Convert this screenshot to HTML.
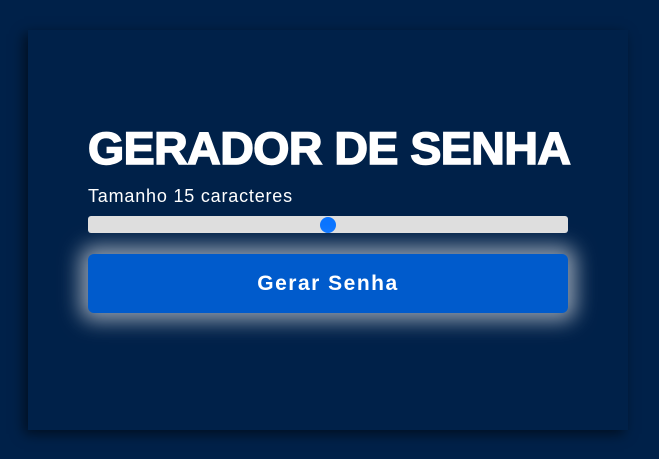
<!DOCTYPE html>
<html><head><meta charset="utf-8"><style>
html,body{margin:0;padding:0;width:659px;height:459px;overflow:hidden;background:#002149;font-family:"Liberation Sans",sans-serif;}
.card{position:absolute;left:28px;top:30px;width:600px;height:400px;background:#002149;box-shadow:-4px 4px 12px rgba(0,0,0,0.55);}
.title{position:absolute;left:88px;top:124px;font-size:45px;font-weight:900;color:#fff;white-space:nowrap;transform-origin:left top;transform:scaleX(1.033);letter-spacing:-0.5px;-webkit-text-stroke:1.5px #fff;line-height:50px;}
.label{position:absolute;left:88px;top:186px;font-size:18px;letter-spacing:0.8px;color:#fff;}
.track{position:absolute;left:88px;top:216px;width:480px;height:17px;background:#dedede;border-radius:3px;}
.thumb{position:absolute;left:320px;top:217px;width:16px;height:16px;border-radius:50%;background:#0a74ff;}
.btn{position:absolute;left:88px;top:254px;width:480px;height:59px;background:#005bcc;border-radius:6px;box-shadow:0 0 20px 8px rgba(255,255,255,0.55);color:#fff;font-weight:bold;font-size:21px;letter-spacing:1.5px;text-align:center;line-height:59px;}
</style></head><body>
<div class="card"></div>
<div class="title">GERADOR DE SENHA</div>
<div class="label">Tamanho 15 caracteres</div>
<div class="track"></div>
<div class="thumb"></div>
<div class="btn">Gerar Senha</div>
</body></html>
